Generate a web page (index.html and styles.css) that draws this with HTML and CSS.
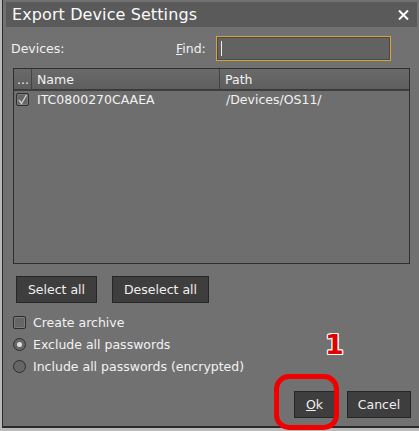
FILE: index.html
```html
<!DOCTYPE html>
<html>
<head>
<meta charset="utf-8">
<link rel="stylesheet" href="styles.css">
</head>
<body>
<div class="dialog">
  <div class="titlebar">
    <span class="title">Export Device Settings</span>
    <svg class="close" width="11" height="10" viewBox="0 0 11 10"><path d="M1 0.5L10 9.5M10 0.5L1 9.5" stroke="#fff" stroke-width="2"/></svg>
  </div>
  <div class="toprow">
    <span class="label">Devices:</span>
    <span class="find"><u>F</u>ind:</span>
    <div class="input"><span class="caret"></span></div>
  </div>
  <div class="table">
    <div class="thead">
      <div class="c0">...</div>
      <div class="c1">Name</div>
      <div class="c2">Path</div>
    </div>
    <div class="row">
      <div class="c0"><span class="chk"><svg width="11" height="11" viewBox="0 0 11 11"><path d="M2 6L4.5 9.5L9.5 1" stroke="#cfcfcf" stroke-width="1.4" fill="none"/></svg></span></div>
      <div class="c1">ITC0800270CAAEA</div>
      <div class="c2">/Devices/OS11/</div>
    </div>
  </div>
  <div class="btnrow">
    <button class="btn sel">Select all</button>
    <button class="btn desel">Deselect all</button>
  </div>
  <div class="opts">
    <div class="opt"><span class="box"></span>Create archive</div>
    <div class="opt"><span class="radio on"></span>Exclude all passwords</div>
    <div class="opt"><span class="radio"></span>Include all passwords (encrypted)</div>
  </div>
  <div class="footer">
    <span class="badge">1</span>
    <div class="okwrap">
      <button class="btn ok"><u>O</u>k</button>
      <span class="ring"></span>
    </div>
    <button class="btn cancel">Cancel</button>
  </div>
</div>
</body>
</html>
```
FILE: styles.css
```css
html, body { margin: 0; padding: 0; }
body {
  width: 419px; height: 431px; overflow: hidden;
  background: #b9b9b9;
  font-family: "DejaVu Sans", sans-serif;
  font-size: 12.5px; color: #f2f2f2;
}
.dialog {
  margin-left: 2px;
  width: 417px; height: 428px;
  background: #717171;
  border-left: 1px solid #2a2a2a;
  border-bottom: 2px solid #2a2a2a;
  box-sizing: border-box;
  display: flex; flex-direction: column;
  position: relative;
}
.titlebar {
  margin: 2px 0 0 3px;
  width: 411px; height: 25px;
  background: #5a5a5a;
  display: flex; align-items: center; justify-content: space-between;
  padding: 0 8px 0 6px; box-sizing: border-box;
}
.title { font-size: 16px; color: #fafafa; letter-spacing: 0.1px; }
.close { display: block; }
.toprow {
  display: flex; align-items: center;
  height: 26px; margin-top: 8px; padding-left: 8px;
}
.label { width: 165px; }
.find { width: 40px; }
.find u { text-decoration-thickness: 1px; }
.input {
  width: 175px; height: 25px; box-sizing: border-box;
  border: 1px solid #d4a534; background: #626262;
  box-shadow: inset 0 0 0 1px #4a4a4a;
  display: flex; align-items: center; padding-left: 4px;
}
.caret { width: 1px; height: 15px; background: #f0f0f0; }
.table {
  margin: 7px 0 0 10px;
  width: 397px; height: 196px; box-sizing: border-box;
  border: 1px solid #2f2f2f;
  background: #6e6e6e;
}
.thead {
  display: flex; height: 20px;
  background: linear-gradient(#6a6a6a, #5e5e5e);
  border-bottom: 1px solid #3a3a3a;
  box-shadow: 0 1px 0 #3f3f3f;
}
.thead > div { display: flex; align-items: center; padding-left: 5px; box-sizing: border-box; border-right: 1px solid #444; }
.thead .c2 { border-right: none; }
.c0 { width: 18px; }
.c1 { width: 188px; }
.c2 { flex: 1; }
.thead .c0 { padding-left: 3px; }
.row { display: flex; height: 18px; margin-top: 0; align-items: center; }
.row > div { padding-left: 5px; box-sizing: border-box; }
.row .c0 { padding-left: 2px; }
.row .c1 { padding-left: 5px; }
.row .c2 { padding-left: 6px; }
.chk {
  display: flex; align-items: center; justify-content: center;
  width: 13px; height: 13px; box-sizing: border-box;
  border: 1px solid #2e2e2e; background: #666; border-radius: 2px;
  box-shadow: inset 0 0 0 1px #7a7a7a;
}
.btn {
  font-family: "DejaVu Sans", sans-serif; font-size: 12.5px; color: #efefef;
  background: #3e3e3e; border: 1px solid #262626;
  height: 27px; box-sizing: border-box; padding: 0; margin: 0;
}
.btnrow { display: flex; gap: 15px; margin: 12px 0 0 13px; }
.sel { width: 81px; }
.desel { width: 97px; }
.opts { margin: 13px 0 0 10px; display: flex; flex-direction: column; gap: 9px; }
.opt { display: flex; align-items: center; height: 13px; gap: 7px; }
.box {
  width: 13px; height: 13px; box-sizing: border-box;
  border: 1px solid #2e2e2e; background: #666; border-radius: 2px;
  box-shadow: inset 0 0 0 1px #7a7a7a;
}
.radio {
  width: 13px; height: 13px; box-sizing: border-box; border-radius: 50%;
  border: 1px solid #2e2e2e; background: #666;
  display: flex; align-items: center; justify-content: center;
}
.radio.on::after { content: ""; width: 5px; height: 5px; border-radius: 50%; background: #e0e0e0; }
.footer {
  margin-top: auto; margin-bottom: 8px;
  display: flex; justify-content: flex-end; padding-right: 8px; gap: 12px;
  position: relative;
}
.ok { width: 41px; }
.cancel { width: 64px; }
.okwrap { position: relative; }
.ring {
  position: absolute; left: -20px; top: -17px;
  width: 65px; height: 56px; box-sizing: border-box;
  border: 5px solid #f20000; border-radius: 15px;
}
.badge {
  position: absolute; left: 322px; top: -62px;
  font-family: "DejaVu Sans", sans-serif; font-weight: bold; font-size: 27px;
  color: #e00000;
  text-shadow: 1px 0 #fff, -1px 0 #fff, 0 1px #fff, 0 -1px #fff, 1px 1px #fff, -1px -1px #fff, 1px -1px #fff, -1px 1px #fff;
}
```
